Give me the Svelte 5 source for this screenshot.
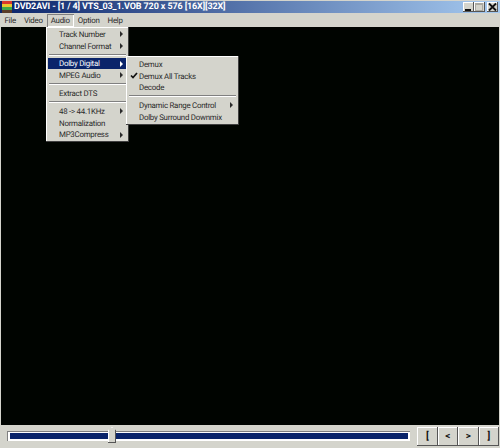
<script>
const audioItems = [
  { label: 'Track Number', sub: true },
  { label: 'Channel Format', sub: true },
  { sep: true },
  { label: 'Dolby Digital', sub: true, active: true },
  { label: 'MPEG Audio', sub: true },
  { sep: true },
  { label: 'Extract DTS' },
  { sep: true },
  { label: '48 -> 44.1KHz', sub: true },
  { label: 'Normalization' },
  { label: 'MP3Compress', sub: true }
];
const dolbyItems = [
  { label: 'Demux' },
  { label: 'Demux All Tracks', checked: true },
  { label: 'Decode' },
  { sep: true },
  { label: 'Dynamic Range Control', sub: true },
  { label: 'Dolby Surround Downmix' }
];
const menus = ['File', 'Video', 'Audio', 'Option', 'Help'];
const transport = ['[', '<', '>', ']'];
</script>

{#snippet menuRows(items)}
  {#each items as item}
    {#if item.sep}
      <div class="sep"></div>
    {:else}
      <div class="row" class:active={item.active}>
        <span class="check">
          {#if item.checked}
            <svg width="8" height="7" viewBox="0 0 8 7"><path d="M1 3.5 L3 5.5 L7 1" fill="none" stroke="#111" stroke-width="1.7" /></svg>
          {/if}
        </span>
        <span class="label">{item.label}</span>
        {#if item.sub}<span class="arrow"></span>{/if}
      </div>
    {/if}
  {/each}
{/snippet}

<div class="window">
  <div class="titlebar">
    <svg class="appicon" width="10" height="12" viewBox="0 0 10 12">
      <rect width="10" height="3" fill="#d8382c" />
      <rect y="3" width="10" height="3" fill="#e8c830" />
      <rect y="6" width="10" height="3" fill="#3fa848" />
      <rect y="9" width="10" height="3" fill="#5a3c28" />
    </svg>
    <span class="title">DVD2AVI - [1 / 4] VTS_03_1.VOB 720 x 576 [16X][32X]</span>
    <div class="winbtns">
      <div class="winbtn"><svg width="11" height="10" viewBox="0 0 11 10"><rect x="2" y="7" width="6" height="2" fill="#111" /></svg></div>
      <div class="winbtn"><svg width="11" height="10" viewBox="0 0 11 10"><rect x="1.5" y="1.5" width="7" height="7" fill="none" stroke="#a9a8a0" /><rect x="1" y="1" width="8" height="2" fill="#a9a8a0" /></svg></div>
      <div class="winbtn close"><svg width="11" height="10" viewBox="0 0 11 10"><path d="M2 1.5 L9 8.5 M9 1.5 L2 8.5" stroke="#111" stroke-width="1.8" /></svg></div>
    </div>
  </div>

  <div class="menubar">
    {#each menus as m}
      <span class="menu" class:open={m === 'Audio'}>{m}</span>
    {/each}
  </div>

  <div class="video"></div>

  <div class="controls">
    <div class="track">
      <div class="fill"></div>
      <div class="thumb"></div>
    </div>
    <div class="buttons">
      {#each transport as t}
        <div class="tbtn">{t}</div>
      {/each}
    </div>
  </div>

  <div class="popup audio">{@render menuRows(audioItems)}</div>
  <div class="popup dolby">{@render menuRows(dolbyItems)}</div>
</div>

<style>
  :global(body) {
    margin: 0;
    background: #d4d4cc;
  }

  .window {
    position: relative;
    width: 500px;
    height: 448px;
    display: flex;
    flex-direction: column;
    background: #d4d4cc;
    font-family: Roboto, "Liberation Sans", sans-serif;
    font-size: 7.9px;
    letter-spacing: -0.25px;
    text-rendering: geometricPrecision;
    color: #2a2a2a;
    overflow: hidden;
  }

  .titlebar {
    height: 12px;
    margin-top: 1px;
    display: flex;
    align-items: center;
    padding: 0 2px;
    background: linear-gradient(to right, #0a246a, #a6caf0);
    color: #fff;
    flex: none;
  }

  .appicon {
    margin-right: 2px;
    flex: none;
  }

  .title {
    font-weight: bold;
    font-size: 9px;
    letter-spacing: -0.12px;
    white-space: nowrap;
  }

  .winbtns {
    margin-left: auto;
    display: flex;
  }

  .winbtn {
    width: 11px;
    height: 10px;
    background: #d4d4cc;
    box-shadow: inset -1px -1px #555, inset 1px 1px #fff;
    display: flex;
  }

  .winbtn.close {
    margin-left: 2px;
  }

  .menubar {
    height: 14px;
    display: flex;
    align-items: center;
    flex: none;
    gap: 8px;
    padding-left: 4.5px;
  }

  .menu {
    position: relative;
    line-height: 13px;
  }

  .menu.open::before {
    content: "";
    position: absolute;
    inset: 0 -4px;
    box-shadow: inset 1px 1px #808080, inset -1px -1px #fff;
  }

  .video {
    flex: 1;
    background: #000400;
    margin: 0 1px;
  }

  .controls {
    height: 23px;
    flex: none;
    display: flex;
    align-items: flex-start;
    padding: 0 1px 0 7px;
  }

  .track {
    position: relative;
    width: 403px;
    height: 10px;
    margin-top: 6px;
    padding: 2px 2px 2px 3px;
    box-sizing: border-box;
    background: #fff;
    box-shadow: inset 1px 1px #808080;
  }

  .fill {
    height: 100%;
    background: #0a246a;
  }

  .thumb {
    position: absolute;
    left: 101px;
    top: -4px;
    width: 8px;
    height: 16px;
    background: #d4d4cc;
    clip-path: polygon(50% 0, 100% 20%, 100% 100%, 0 100%, 0 20%);
    box-shadow: inset -1px -1px #555, inset 1px 1px #fff;
  }

  .buttons {
    display: flex;
    margin-left: 7px;
    margin-top: 2px;
  }

  .tbtn {
    width: 20.5px;
    height: 19px;
    background: #d4d4cc;
    box-shadow: inset -1px -1px #555, inset 1px 1px #fff;
    display: flex;
    align-items: center;
    justify-content: center;
    font-weight: bold;
    font-size: 10px;
    color: #111;
  }

  .popup {
    position: absolute;
    box-sizing: border-box;
    background: #d4d4cc;
    padding: 1px 2px;
    box-shadow: inset -1px -1px #404040, inset 1px 1px #fff;
  }

  .audio {
    left: 46px;
    top: 27px;
    width: 83px;
    height: 115px;
  }

  .dolby {
    left: 126px;
    top: 56px;
    width: 113px;
    height: 69px;
    padding-top: 2px;
  }

  .row {
    height: 11.8px;
    display: flex;
    align-items: center;
    white-space: nowrap;
    position: relative;
  }

  .row.active {
    background: #0a246a;
    color: #fff;
  }

  .check {
    width: 11px;
    flex: none;
    display: flex;
    justify-content: center;
  }

  .label {
    flex: 1;
    padding-top: 1px;
  }

  .arrow {
    position: absolute;
    right: 4px;
    top: 3px;
    border-left: 3px solid currentColor;
    border-top: 3px solid transparent;
    border-bottom: 3px solid transparent;
  }

  .sep {
    height: 2px;
    margin: 2px 1px;
    background: linear-gradient(#808080 50%, #fff 50%);
  }
</style>
